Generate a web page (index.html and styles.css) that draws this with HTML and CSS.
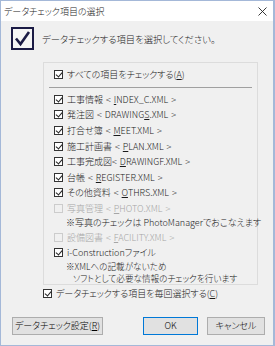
FILE: index.html
```html
<!DOCTYPE html>
<html lang="ja">
<head>
<meta charset="utf-8">
<link rel="stylesheet" href="styles.css">
</head>
<body>
<div class="window">
  <div class="titlebar">
    <span class="title">データチェック項目の選択</span>
    <svg class="close" width="9" height="9" viewBox="0 0 9 9"><path d="M0.5 0.5L8.5 8.5M8.5 0.5L0.5 8.5" stroke="#222" stroke-width="0.9" fill="none"/></svg>
  </div>
  <div class="content">
    <div class="heading">
      <svg class="bigcheck" width="23" height="23" viewBox="0 0 23 23">
        <rect x="1" y="1" width="21" height="21" fill="#f5f5f5" stroke="#1b1b45" stroke-width="2"/>
        <path d="M5 11.5L9.5 17L18 5" stroke="#1b1b45" stroke-width="2.6" fill="none" stroke-linejoin="miter"/>
      </svg>
      <span class="heading-text">データチェックする項目を選択してください。</span>
    </div>
    <div class="group">
      <div class="row"><span class="cb on"></span><span>すべての項目をチェックする(<u>A</u>)</span></div>
      <div class="sep"></div>
      <div class="row"><span class="cb on"></span><span>工事情報 &lt; <u>I</u>NDEX_C.XML &gt;</span></div>
      <div class="row"><span class="cb on"></span><span>発注図 &lt; DRAWING<u>S</u>.XML &gt;</span></div>
      <div class="row"><span class="cb on"></span><span>打合せ簿 &lt; <u>M</u>EET.XML &gt;</span></div>
      <div class="row"><span class="cb on"></span><span>施工計画書 &lt; <u>P</u>LAN.XML &gt;</span></div>
      <div class="row"><span class="cb on"></span><span>工事完成図&lt; <u>D</u>RAWINGF.XML &gt;</span></div>
      <div class="row"><span class="cb on"></span><span>台帳 &lt; <u>R</u>EGISTER.XML &gt;</span></div>
      <div class="row"><span class="cb on"></span><span>その他資料 &lt; <u>O</u>THRS.XML &gt;</span></div>
      <div class="row disabled"><span class="cb"></span><span>写真管理 &lt; <u>P</u>HOTO.XML &gt;</span></div>
      <div class="note">※写真のチェックは PhotoManagerでおこなえます</div>
      <div class="row disabled"><span class="cb"></span><span>設備図書 &lt; <u>F</u>ACILITY.XML &gt;</span></div>
      <div class="row row-short"><span class="cb on"></span><span>i-Constructionファイル</span></div>
      <div class="note note-multi">※XMLへの記載がないため<br>ソフトとして必要な情報のチェックを行います</div>
    </div>
    <div class="row everytime"><span class="cb on"></span><span>データチェックする項目を毎回選択する(<u>C</u>)</span></div>
    <div class="buttons">
      <button class="btn btn-settings">データチェック設定(<u>R</u>)</button>
      <span class="spacer"></span>
      <button class="btn btn-ok">OK</button>
      <button class="btn btn-cancel">キャンセル</button>
    </div>
  </div>
</div>
</body>
</html>
```
FILE: styles.css
```css
* { box-sizing: border-box; }
html, body { margin: 0; padding: 0; }
body {
  font-family: "Noto Sans CJK JP", "Noto Sans", sans-serif;
  font-size: 9px;
  font-weight: 300;
  font-feature-settings: "palt";
  color: #1a1a1a;
  background: #fff;
}
.window {
  width: 275px;
  height: 346px;
  border: 1px solid #a4b8d8;
  border-right-width: 2px;
  background: #f0f0f0;
  display: flex;
  flex-direction: column;
}
.titlebar {
  height: 20px;
  background: #fff;
  display: flex;
  align-items: center;
  padding: 0 6px 0 3px;
}
.title { flex: 1; font-size: 9px; }
.close { display: block; }
.content { flex: 1; display: flex; flex-direction: column; }
.heading {
  display: flex;
  align-items: center;
  margin: 6px 0 0 10px;
  height: 23px;
}
.bigcheck { display: block; }
.heading-text { margin-left: 8px; font-size: 9.3px; }
.group {
  margin: 12px 0 0 42px;
  width: 215px;
  border: 1px solid #dcdcdc;
  padding: 4px 0 0 10px;
}
.row {
  display: flex;
  align-items: center;
  height: 15.6px;
  white-space: nowrap;
  word-spacing: 1px;
}
.row-short { height: 14.6px; }
.cb {
  width: 9px;
  height: 9px;
  border: 1px solid #333;
  background: #fff;
  margin-right: 4px;
  flex: none;
  position: relative;
}
.cb.on::after {
  content: "";
  position: absolute;
  left: 2px;
  top: 0px;
  width: 3px;
  height: 5px;
  border-right: 1px solid #222;
  border-bottom: 1px solid #222;
  transform: rotate(40deg);
}
.disabled { color: #a6a6a6; }
.disabled .cb { border-color: #cccccc; background: #f0f0f0; }
.sep {
  height: 1px;
  background: #a0a0a0;
  margin: 4px 5px 4px -5px;
}
.note {
  padding-left: 12px;
  height: 13.5px;
  line-height: 13.5px;
  white-space: nowrap;
}
.note-multi {
  font-size: 8.6px;
  height: 24px;
  line-height: 12px;
  padding-left: 19px;
  text-indent: -7px;
}
.everytime { margin: 1px 0 0 42px; }
.buttons {
  display: flex;
  margin: 15px 0 0 11px;
  padding-right: 8px;
}
.spacer { flex: 1; }
.btn {
  height: 18px;
  font-family: inherit;
  font-size: 9px;
  font-weight: 300;
  font-feature-settings: "palt";
  background: #e1e1e1;
  border: 1px solid #adadad;
  padding: 0;
  margin: 0;
  color: #000;
}
.btn-settings { width: 91px; }
.btn-ok { width: 55px; border-color: #0078d7; margin-right: 9px; }
.btn-cancel { width: 58px; }
u { text-decoration: underline; text-underline-offset: 1px; }
```
